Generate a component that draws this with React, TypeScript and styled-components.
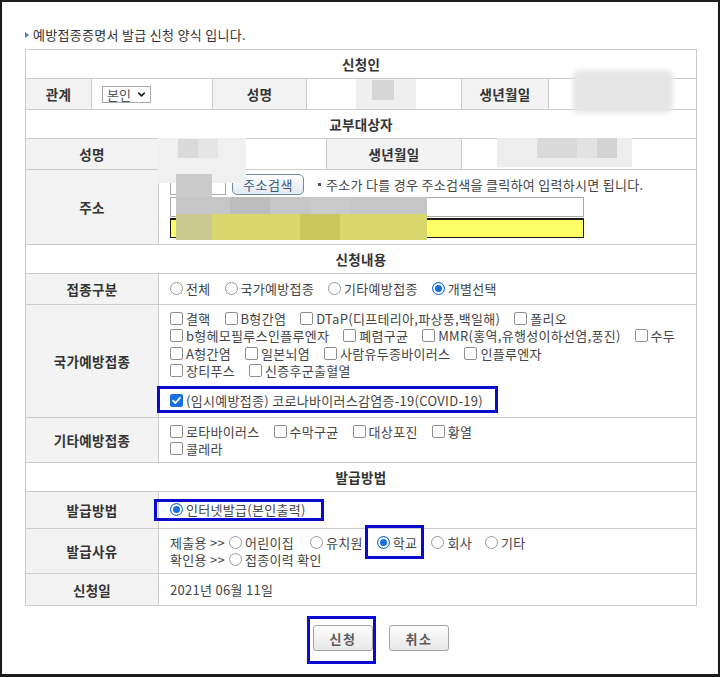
import React from 'react';
import styled, { createGlobalStyle } from 'styled-components';
import { ChevronDown } from 'lucide-react';

const GlobalStyle = createGlobalStyle`
  html, body { margin: 0; padding: 0; background: #fff; }
  body { font-family: "Noto Sans CJK KR", "Noto Sans", sans-serif; }
  * { box-sizing: border-box; }
`;

const Page = styled.div`
  position: relative;
  width: 720px;
  height: 677px;
  border: 2px solid #1c1c1c;
  border-bottom-width: 3px;
  padding: 25px 0 0 23px;
  background: #fff;
  color: #444;
  font-size: 13px;
  letter-spacing: 0.3px;
  overflow: hidden;
`;

const Title = styled.div`
  display: flex;
  align-items: center;
  gap: 4px;
  height: 16px;
  line-height: 16px;
  color: #333;
  font-size: 13px;
`;

const Arrow = styled.span`
  width: 0;
  height: 0;
  border-left: 4px solid #4d7cc0;
  border-top: 3px solid transparent;
  border-bottom: 3px solid transparent;
`;

const Form = styled.table`
  margin-top: 6px;
  width: 671px;
  border-collapse: collapse;
  table-layout: fixed;
  border: 1px solid #c2c2c2;
`;

const Row = styled.tr<{ $h: number }>`
  height: ${(p) => p.$h}px;
`;

const Head = styled.th`
  background: #fff;
  font-weight: bold;
  color: #333;
  font-size: 13.5px;
  letter-spacing: 0.3px;
  text-align: center;
  border: 1px solid #cccccc;
  padding: 0;
`;

const Label = styled.th`
  background: #f3f3f3;
  font-weight: bold;
  color: #333;
  font-size: 13.5px;
  letter-spacing: 0.3px;
  text-align: center;
  border: 1px solid #cccccc;
  padding: 0;
`;

const Cell = styled.td<{ $pad?: string; $valign?: string }>`
  border: 1px solid #cccccc;
  padding: ${(p) => p.$pad ?? '0 11px'};
  vertical-align: ${(p) => p.$valign ?? 'middle'};
  text-align: left;
  color: #444;
  font-size: 13px;
  letter-spacing: 0.3px;
  line-height: 17px;
`;

const Select = styled.div`
  display: inline-flex;
  align-items: center;
  justify-content: space-between;
  width: 49px;
  height: 17px;
  border: 1px solid #a9a9a9;
  padding: 0 3px 0 4px;
  color: #555;
  background: #fff;
  font-size: 13px;
  letter-spacing: 0;
`;

const Line = styled.div<{ $mt?: number }>`
  display: flex;
  align-items: center;
  height: 17.3px;
  margin-top: ${(p) => p.$mt ?? 0}px;
  white-space: nowrap;
`;

const Opt = styled.span<{ $mr?: number }>`
  display: inline-flex;
  align-items: center;
  gap: 3px;
  margin-right: ${(p) => p.$mr ?? 14}px;
  white-space: nowrap;
`;

const RadioDot = styled.span<{ $on?: boolean }>`
  flex: none;
  width: 13px;
  height: 13px;
  border-radius: 50%;
  border: 1px solid ${(p) => (p.$on ? '#1a6fe0' : '#999999')};
  background: ${(p) => (p.$on ? '#1a6fe0' : '#fff')};
  box-shadow: ${(p) => (p.$on ? 'inset 0 0 0 2px #fff' : 'none')};
`;

const Box = styled.span<{ $on?: boolean }>`
  flex: none;
  width: 13px;
  height: 13px;
  border-radius: 2px;
  border: 1px solid ${(p) => (p.$on ? '#1a6fe0' : '#8f8f8f')};
  background: ${(p) => (p.$on ? '#1a6fe0' : '#fff')};
  display: inline-flex;
  align-items: center;
  justify-content: center;
`;

const Mark = styled.span<{ $t: number; $r: number; $b: number; $l: number }>`
  position: relative;
  display: inline-flex;
  align-items: center;
  &::after {
    content: '';
    position: absolute;
    top: ${(p) => -p.$t}px;
    right: ${(p) => -p.$r}px;
    bottom: ${(p) => -p.$b}px;
    left: ${(p) => -p.$l}px;
    border: 3px solid #0b0bd0;
    pointer-events: none;
  }
`;

const AddrTop = styled.div`
  display: flex;
  align-items: flex-end;
  height: 22px;
`;

const ZipInput = styled.div`
  width: 56px;
  height: 18px;
  border: 1px solid #a9a9a9;
  background: #fff;
  margin-right: 6px;
`;

const SearchBtn = styled.span`
  display: inline-flex;
  align-items: center;
  justify-content: center;
  width: 72px;
  height: 21px;
  border: 1px solid #7189a6;
  border-radius: 5px;
  background: linear-gradient(#ffffff, #e3e9f1);
  color: #3a587a;
  font-size: 13px;
  letter-spacing: 0.5px;
  margin-right: 14px;
`;

const Note = styled.span`
  display: inline-flex;
  align-items: center;
  gap: 5px;
  height: 21px;
  color: #444;
`;

const Bullet = styled.span`
  width: 3px;
  height: 3px;
  background: #555;
`;

const TextInput = styled.div<{ $yellow?: boolean; $mt: number }>`
  width: 414px;
  height: 20px;
  margin-top: ${(p) => p.$mt}px;
  background: ${(p) => (p.$yellow ? '#ffff66' : '#fff')};
  border: 1px solid ${(p) => (p.$yellow ? '#1a1a1a' : '#a9a9a9')};
  border-top-width: ${(p) => (p.$yellow ? 2 : 1)}px;
`;

const ButtonBar = styled.div`
  display: flex;
  gap: 16px;
  margin-top: 19px;
  padding-left: 288px;
`;

const Btn = styled.button`
  width: 60px;
  height: 26px;
  padding: 0;
  border: 1px solid #a3a3a3;
  border-radius: 3px;
  background: linear-gradient(#fdfdfd, #e8e8e8);
  color: #5a5a5a;
  font-family: "Noto Sans CJK KR", "Noto Sans", sans-serif;
  font-size: 13px;
  font-weight: bold;
  letter-spacing: 1.5px;
`;

const Pixel = styled.div<{ $x: number; $y: number; $w: number; $h: number; $c: string; $r?: number; $blur?: number }>`
  position: absolute;
  left: ${(p) => p.$x - 2}px;
  top: ${(p) => p.$y - 2}px;
  width: ${(p) => p.$w}px;
  height: ${(p) => p.$h}px;
  background: ${(p) => p.$c};
  border-radius: ${(p) => p.$r ?? 0}px;
  filter: blur(${(p) => p.$blur ?? 0.6}px);
  pointer-events: none;
`;

const Radio = ({ on, children, mr }: { on?: boolean; children: React.ReactNode; mr?: number }) => (
  <Opt $mr={mr}>
    <RadioDot $on={on} />
    {children}
  </Opt>
);

const Check = ({ on, children, mr }: { on?: boolean; children: React.ReactNode; mr?: number }) => (
  <Opt $mr={mr}>
    <Box $on={on}>
      {on && (
        <svg width="11" height="11" viewBox="0 0 11 11">
          <polyline points="2,5.6 4.4,8 9,2.8" fill="none" stroke="#fff" strokeWidth="1.8" strokeLinecap="round" strokeLinejoin="round" />
        </svg>
      )}
    </Box>
    {children}
  </Opt>
);

const nationalLines = [
  ['결핵', 'B형간염', 'DTaP(디프테리아,파상풍,백일해)', '폴리오'],
  ['b형헤모필루스인플루엔자', '폐렴구균', 'MMR(홍역,유행성이하선염,풍진)', '수두'],
  ['A형간염', '일본뇌염', '사람유두종바이러스', '인플루엔자'],
  ['장티푸스', '신증후군출혈열'],
];

const otherLines = [
  ['로타바이러스', '수막구균', '대상포진', '황열'],
  ['콜레라'],
];

const blurs = [
  { x: 356, y: 79, w: 60, h: 30, c: '#efefef' },
  { x: 372, y: 80, w: 22, h: 20, c: '#d6d6d6' },
  { x: 573, y: 70, w: 100, h: 43, c: '#e6e6e6', r: 6, blur: 2 },
  { x: 158, y: 138, w: 88, h: 45, c: '#f0f0f0' },
  { x: 178, y: 139, w: 20, h: 19, c: '#dadada' },
  { x: 198, y: 139, w: 20, h: 19, c: '#e4e4e4' },
  { x: 497, y: 138, w: 135, h: 29, c: '#ededed' },
  { x: 537, y: 138, w: 40, h: 20, c: '#d9d9d9' },
  { x: 577, y: 138, w: 20, h: 20, c: '#e2e2e2' },
  { x: 597, y: 138, w: 20, h: 20, c: '#d3d3d3' },
  { x: 176, y: 174, w: 36, h: 23, c: '#cbcbcb' },
  { x: 176, y: 197, w: 251, h: 17, c: '#c6c6c6' },
  { x: 230, y: 197, w: 40, h: 17, c: '#bdbdbd' },
  { x: 310, y: 197, w: 40, h: 17, c: '#cacaca' },
  { x: 176, y: 214, w: 251, h: 26, c: '#d8d76c' },
  { x: 176, y: 214, w: 36, h: 26, c: '#c9c88f' },
  { x: 300, y: 214, w: 40, h: 26, c: '#c9c85f' },
];

export default function App() {
  return (
    <>
      <GlobalStyle />
      <Page>
        <Title>
          <Arrow />
          예방접종증명서 발급 신청 양식 입니다.
        </Title>
        <Form>
          <colgroup>
            <col style={{ width: 66 }} />
            <col style={{ width: 67 }} />
            <col style={{ width: 54 }} />
            <col style={{ width: 94 }} />
            <col style={{ width: 20 }} />
            <col style={{ width: 135 }} />
            <col style={{ width: 87 }} />
            <col style={{ width: 148 }} />
          </colgroup>
          <tbody>
            <Row $h={29}>
              <Head colSpan={8}>신청인</Head>
            </Row>
            <Row $h={31}>
              <Label>관계</Label>
              <Cell colSpan={2} $pad="0 10px">
                <Select>
                  본인
                  <ChevronDown size={11} strokeWidth={3.5} color="#222" />
                </Select>
              </Cell>
              <Label>성명</Label>
              <Cell colSpan={2} />
              <Label>생년월일</Label>
              <Cell />
            </Row>
            <Row $h={29}>
              <Head colSpan={8}>교부대상자</Head>
            </Row>
            <Row $h={31}>
              <Label colSpan={2}>성명</Label>
              <Cell colSpan={3} />
              <Label>생년월일</Label>
              <Cell colSpan={2} />
            </Row>
            <Row $h={75}>
              <Label colSpan={2}>주소</Label>
              <Cell colSpan={6} $pad="3px 11px 6px" $valign="top">
                <AddrTop>
                  <ZipInput />
                  <SearchBtn>주소검색</SearchBtn>
                  <Note>
                    <Bullet />
                    주소가 다를 경우 주소검색을 클릭하여 입력하시면 됩니다.
                  </Note>
                </AddrTop>
                <TextInput $mt={2} />
                <TextInput $mt={1} $yellow />
              </Cell>
            </Row>
            <Row $h={29}>
              <Head colSpan={8}>신청내용</Head>
            </Row>
            <Row $h={31}>
              <Label colSpan={2}>접종구분</Label>
              <Cell colSpan={6}>
                <Line>
                  <Radio>전체</Radio>
                  <Radio>국가예방접종</Radio>
                  <Radio>기타예방접종</Radio>
                  <Radio on>개별선택</Radio>
                </Line>
              </Cell>
            </Row>
            <Row $h={113}>
              <Label colSpan={2}>국가예방접종</Label>
              <Cell colSpan={6} $pad="5px 11px" $valign="top">
                {nationalLines.map((line, i) => (
                  <Line key={i}>
                    {line.map((t) => (
                      <Check key={t}>{t}</Check>
                    ))}
                  </Line>
                ))}
                <Line $mt={13}>
                  <Mark $t={6} $r={15} $b={4} $l={13}>
                    <Check on mr={0}>(임시예방접종) 코로나바이러스감염증-19(COVID-19)</Check>
                  </Mark>
                </Line>
              </Cell>
            </Row>
            <Row $h={45}>
              <Label colSpan={2}>기타예방접종</Label>
              <Cell colSpan={6}>
                {otherLines.map((line, i) => (
                  <Line key={i}>
                    {line.map((t) => (
                      <Check key={t}>{t}</Check>
                    ))}
                  </Line>
                ))}
              </Cell>
            </Row>
            <Row $h={29}>
              <Head colSpan={8}>발급방법</Head>
            </Row>
            <Row $h={37}>
              <Label colSpan={2}>발급방법</Label>
              <Cell colSpan={6}>
                <Line>
                  <Mark $t={2} $r={18} $b={3} $l={16}>
                    <Radio on mr={0}>인터넷발급(본인출력)</Radio>
                  </Mark>
                </Line>
              </Cell>
            </Row>
            <Row $h={45}>
              <Label colSpan={2}>발급사유</Label>
              <Cell colSpan={6}>
                <Line>
                  <Opt $mr={4}>제출용 &gt;&gt;</Opt>
                  <Radio mr={16}>어린이집</Radio>
                  <Radio mr={14}>유치원</Radio>
                  <Mark $t={9} $r={7} $b={8} $l={12}>
                    <Radio on mr={0}>학교</Radio>
                  </Mark>
                  <Opt $mr={14} />
                  <Radio mr={13}>회사</Radio>
                  <Radio>기타</Radio>
                </Line>
                <Line>
                  <Opt $mr={4}>확인용 &gt;&gt;</Opt>
                  <Radio>접종이력 확인</Radio>
                </Line>
              </Cell>
            </Row>
            <Row $h={32}>
              <Label colSpan={2}>신청일</Label>
              <Cell colSpan={6}>2021년 06월 11일</Cell>
            </Row>
          </tbody>
        </Form>
        <ButtonBar>
          <Mark $t={9} $r={3} $b={13} $l={6}>
            <Btn>신청</Btn>
          </Mark>
          <Btn>취소</Btn>
        </ButtonBar>
        {blurs.map((b, i) => (
          <Pixel key={i} $x={b.x} $y={b.y} $w={b.w} $h={b.h} $c={b.c} $r={b.r} $blur={b.blur} />
        ))}
      </Page>
    </>
  );
}
